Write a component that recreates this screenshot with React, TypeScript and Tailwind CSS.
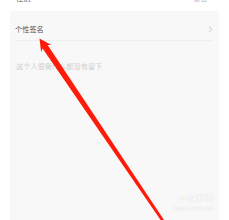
import React from "react";

export default function App() {
  const tip = [39.5, 38.5];
  const tail = [163, 221];
  const dx = tail[0] - tip[0];
  const dy = tail[1] - tip[1];
  const len = Math.hypot(dx, dy);
  const u = [dx / len, dy / len];
  const n = [u[1], -u[0]];
  const headLen = 12;
  const headHalf = 6.2;
  const base = [tip[0] + u[0] * headLen, tip[1] + u[1] * headLen];
  const p = (c: number[], k: number, w: number) => [c[0] + n[0] * k * w, c[1] + n[1] * k * w];
  const neck = [tip[0] + u[0] * (headLen - 2), tip[1] + u[1] * (headLen - 2)];
  const pts = [
    tip,
    p(base, 1, headHalf),
    p(neck, 1, 3),
    p(tail, 1, 1.4),
    p(tail, -1, 1.4),
    p(neck, -1, 3),
    p(base, -1, headHalf),
  ]
    .map((q) => q.map((v) => v.toFixed(2)).join(","))
    .join(" ");

  return (
    <div
      className="relative w-[229px] h-[220px] overflow-hidden bg-white flex flex-col"
      style={{ fontFamily: '"Noto Sans CJK SC", "Noto Sans", sans-serif' }}
    >
      <div className="h-[11px] shrink-0 flex items-start justify-between px-[16px] overflow-hidden">
        <span className="text-[7.2px] leading-[8px] -mt-[6px] text-[#555]">性别</span>
        <span className="text-[7.2px] leading-[8px] -mt-[6px] text-[#bbb]">保密 &gt;</span>
      </div>
      <div className="mx-[10px] flex-1 bg-[#f8f8f8] flex flex-col">
        <div className="flex items-center justify-between pl-[5px] pr-[6px] pt-[12px] pb-[5px]">
          <span className="text-[7.2px] leading-[12px] text-[#555]">个性签名</span>
          <svg width="5" height="7" viewBox="0 0 5 7">
            <path d="M1 0.8 L3.8 3.5 L1 6.2" fill="none" stroke="#bbb" strokeWidth="0.8" />
          </svg>
        </div>
        <div className="mx-[6px] h-px bg-[#efefef]" />
        <div className="pl-[6px] pt-[9px]">
          <span className="text-[7.2px] leading-[12px] text-[#d0d0d0]">这个人很懒什么都没有留下</span>
        </div>
        <div className="flex-1" />
        <div className="flex flex-col items-end pr-[5px] pb-[9px] text-white [text-shadow:0_0_1px_#c8c8c8]">
          <span className="text-[8px] leading-[9px] font-bold" style={{ fontFamily: '"Liberation Sans", sans-serif' }}>
            Bai<span style={{ fontFamily: '"Noto Sans CJK SC", sans-serif' }}>度经验</span>
          </span>
          <span className="text-[5px] leading-[6px] mt-[2px]" style={{ fontFamily: '"Liberation Sans", sans-serif' }}>
            jingyan.baidu.com
          </span>
        </div>
      </div>
      <svg className="absolute left-0 top-0 pointer-events-none" width="229" height="220" viewBox="0 0 229 220">
        <polygon points={pts} fill="#ff1a0a" />
      </svg>
    </div>
  );
}
